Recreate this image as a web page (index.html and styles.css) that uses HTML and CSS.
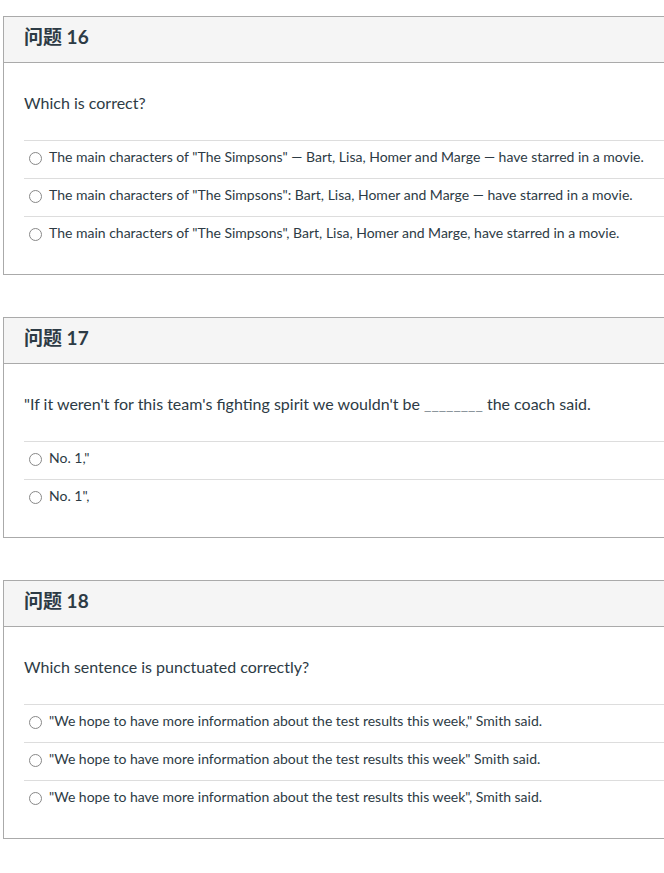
FILE: index.html
```html
<!DOCTYPE html>
<html lang="zh">
<head>
<meta charset="utf-8">
<title>Quiz</title>
<link rel="stylesheet" href="styles.css">
</head>
<body>
<div class="quiz">
  <section class="question">
    <div class="q-header"><h2 class="q-name">问题 16</h2></div>
    <div class="q-body">
      <p class="q-text">Which is correct?</p>
      <ul class="answers">
        <li class="answer"><span class="radio"></span><span class="a-text">The main characters of "The Simpsons" — Bart, Lisa, Homer and Marge — have starred in a movie.</span></li>
        <li class="answer"><span class="radio"></span><span class="a-text">The main characters of "The Simpsons": Bart, Lisa, Homer and Marge — have starred in a movie.</span></li>
        <li class="answer"><span class="radio"></span><span class="a-text">The main characters of "The Simpsons", Bart, Lisa, Homer and Marge, have starred in a movie.</span></li>
      </ul>
    </div>
  </section>

  <section class="question">
    <div class="q-header"><h2 class="q-name">问题 17</h2></div>
    <div class="q-body">
      <p class="q-text">"If it weren't for this team's fighting spirit we wouldn't be <span class="blank">________</span> the coach said.</p>
      <ul class="answers">
        <li class="answer"><span class="radio"></span><span class="a-text">No. 1,"</span></li>
        <li class="answer"><span class="radio"></span><span class="a-text">No. 1",</span></li>
      </ul>
    </div>
  </section>

  <section class="question">
    <div class="q-header"><h2 class="q-name">问题 18</h2></div>
    <div class="q-body">
      <p class="q-text">Which sentence is punctuated correctly?</p>
      <ul class="answers">
        <li class="answer"><span class="radio"></span><span class="a-text">"We hope to have more information about the test results this week," Smith said.</span></li>
        <li class="answer"><span class="radio"></span><span class="a-text">"We hope to have more information about the test results this week" Smith said.</span></li>
        <li class="answer"><span class="radio"></span><span class="a-text">"We hope to have more information about the test results this week", Smith said.</span></li>
      </ul>
    </div>
  </section>
</div>
</body>
</html>
```
FILE: styles.css
```css
html, body {
  margin: 0;
  padding: 0;
  background: #ffffff;
}

body {
  font-family: Lato, "Noto Sans CJK SC", sans-serif;
  color: #2d3b45;
}

.quiz {
  padding-top: 16px;
  padding-left: 3px;
}

.question {
  border: 1px solid #aaaaaa;
  border-right: 0;
  margin-bottom: 42px;
}

.q-header {
  background: #f5f5f5;
  border-bottom: 1px solid #aaaaaa;
  height: 46px;
  box-sizing: border-box;
  display: flex;
  align-items: center;
  padding-left: 20px;
  padding-bottom: 8px;
}

.q-name {
  margin: 0;
  font-size: 19px;
  font-weight: 700;
  color: #2d3b45;
  font-family: Lato, "Noto Sans CJK SC", sans-serif;
}

.q-body {
  padding: 29px 0 20px 20px;
}

.q-text {
  margin: 0 0 26px 0;
  font-size: 16px;
  line-height: 22px;
}

.blank {
  color: #8b959c;
}

.answers {
  list-style: none;
  margin: 0;
  padding: 0;
}

.answer {
  border-top: 1px solid #dddddd;
  height: 37px;
  box-sizing: content-box;
  display: flex;
  align-items: center;
  padding-left: 5px;
  font-size: 14px;
}

.answer > span {
  margin-bottom: 7px;
}

.radio {
  width: 11px;
  height: 11px;
  border: 1px solid #888888;
  border-radius: 50%;
  margin-right: 7px;
  margin-top: 4px;
  flex: none;
}

.a-text {
  white-space: nowrap;
}
```
